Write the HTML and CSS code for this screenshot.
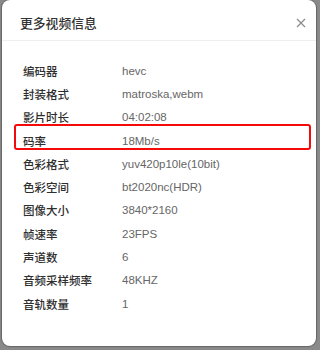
FILE: index.html
```html
<!DOCTYPE html>
<html lang="zh">
<head>
<meta charset="utf-8">
<link rel="stylesheet" href="styles.css">
</head>
<body>
<div class="dialog">
  <div class="header">
    <div class="title">更多视频信息</div>
    <svg class="close" width="10" height="10" viewBox="0 0 10 10"><path d="M1 1L9 9M9 1L1 9" stroke="#8a8a8a" stroke-width="1.2" fill="none"/></svg>
  </div>
  <div class="body">
    <div class="row"><span class="label">编码器</span><span class="value">hevc</span></div>
    <div class="row"><span class="label">封装格式</span><span class="value">matroska,webm</span></div>
    <div class="row"><span class="label">影片时长</span><span class="value">04:02:08</span></div>
    <div class="row highlight"><span class="label">码率</span><span class="value">18Mb/s</span></div>
    <div class="row"><span class="label">色彩格式</span><span class="value">yuv420p10le(10bit)</span></div>
    <div class="row"><span class="label">色彩空间</span><span class="value">bt2020nc(HDR)</span></div>
    <div class="row"><span class="label">图像大小</span><span class="value">3840*2160</span></div>
    <div class="row"><span class="label">帧速率</span><span class="value">23FPS</span></div>
    <div class="row"><span class="label">声道数</span><span class="value">6</span></div>
    <div class="row"><span class="label">音频采样频率</span><span class="value">48KHZ</span></div>
    <div class="row"><span class="label">音轨数量</span><span class="value">1</span></div>
  </div>
</div>
</body>
</html>
```

FILE: styles.css
```css
html, body {
  margin: 0;
  padding: 0;
}
body {
  width: 320px;
  height: 350px;
  background: #8a8a8a;
  overflow: hidden;
  font-family: "Liberation Sans", "Noto Sans CJK SC", sans-serif;
}
.dialog {
  margin-left: 2px;
  width: 314px;
  height: 346px;
  background: #fff;
  border-radius: 8px;
  box-shadow: 0 0 1px 1px #666;
  box-sizing: border-box;
}
.header {
  height: 41px;
  border-bottom: 1px solid #efefef;
  box-sizing: border-box;
  display: flex;
  align-items: center;
  justify-content: space-between;
  padding: 0 10px 0 18px;
}
.title {
  font-family: "Noto Sans CJK SC", sans-serif;
  font-size: 12.8px;
  font-weight: 500;
  color: #333;
  margin-top: 4px;
}
.close {
  display: block;
  margin-top: 5px;
}
.body {
  padding: 18px 0 0 21px;
}
.row {
  position: relative;
  display: flex;
  height: 23.3px;
  align-items: center;
  font-size: 11.5px;
}
.label {
  width: 99px;
  color: #2e2e2e;
  font-family: "Noto Sans CJK SC", sans-serif;
  font-weight: 500;
}
.value {
  color: #666;
}
.highlight::after {
  content: "";
  position: absolute;
  left: -9px;
  top: -5px;
  width: 297px;
  height: 26px;
  border: 2px solid #f50a0a;
  border-radius: 3px;
  box-sizing: border-box;
}
```
